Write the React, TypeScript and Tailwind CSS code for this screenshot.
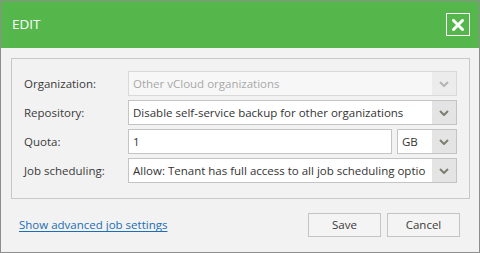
import React from "react";

const font = { fontFamily: '"Open Sans", "Noto Sans", sans-serif' };

function Chevron({ color }: { color: string }) {
  return (
    <svg width="10" height="6" viewBox="0 0 10 6" className="block">
      <polyline points="1,1 5,5 9,1" fill="none" stroke={color} strokeWidth="2" />
    </svg>
  );
}

function Select({ value, disabled, className }: { value: string; disabled?: boolean; className?: string }) {
  return (
    <div
      className={
        "flex min-w-0 h-[25px] border " +
        (disabled ? "border-[#d9d9d9] bg-[#f7f7f7] text-[#a8a8a8] " : "border-[#c4c4c4] bg-white text-[#333333] ") +
        (className ?? "")
      }
    >
      <div className="flex-1 min-w-0 overflow-hidden whitespace-nowrap pl-[4px] leading-[23px]">{value}</div>
      <div className={"w-[24px] shrink-0 flex items-center justify-center " + (disabled ? "bg-[#ececec]" : "bg-[#e4e4e4]")}>
        <Chevron color={disabled ? "#b4b4b4" : "#7d7d70"} />
      </div>
    </div>
  );
}

function Label({ children }: { children: React.ReactNode }) {
  return <div className="w-[104px] shrink-0 text-[#3a3a3a]">{children}</div>;
}

export default function App() {
  return (
    <div className="w-[480px] h-[253px] border border-[#8e8e8e] bg-[#f2f2f2] flex flex-col text-[11.5px]" style={font}>
      <div className="h-[47px] bg-[#55b74b] flex items-center justify-between pl-[11px] pr-[9px]">
        <span className="text-white text-[13.5px]">EDIT</span>
        <div className="w-[24px] h-[23px] border border-white flex items-center justify-center">
          <svg width="12" height="12" viewBox="0 0 12 12" className="block">
            <path d="M1.5 1.5 L10.5 10.5 M10.5 1.5 L1.5 10.5" stroke="white" strokeWidth="3" strokeLinecap="square" fill="none" />
          </svg>
        </div>
      </div>
      <div className="flex-1 flex flex-col pl-[10px] pr-[9px] pt-[10px]">
        <div className="border border-[#c8c8c8] pt-[12px] pb-[15px] pl-[12px] pr-[12px] flex flex-col gap-[4px]">
          <div className="flex items-center">
            <Label>Organization:</Label>
            <Select value="Other vCloud organizations" disabled className="flex-1" />
          </div>
          <div className="flex items-center">
            <Label>Repository:</Label>
            <Select value="Disable self-service backup for other organizations" className="flex-1" />
          </div>
          <div className="flex items-center">
            <Label>Quota:</Label>
            <div className="flex-1 min-w-0 flex gap-[5px]">
              <div className="flex-1 min-w-0 h-[25px] border border-[#c4c4c4] bg-white text-[#333333] pl-[4px] leading-[23px]">1</div>
              <Select value="GB" className="w-[60px] shrink-0" />
            </div>
          </div>
          <div className="flex items-center">
            <Label>Job scheduling:</Label>
            <Select value="Allow: Tenant has full access to all job scheduling optio" className="flex-1" />
          </div>
        </div>
        <div className="flex items-center justify-between pl-[8px] pr-[10px] mt-[14px]">
          <a className="text-[#1c6fb4] underline underline-offset-[2px] cursor-pointer">Show advanced job settings</a>
          <div className="flex gap-[6px]">
            <button className="w-[73px] h-[24px] border border-[#c4c4c4] bg-[#f4f4f4] text-[#3a3a3a]">Save</button>
            <button className="w-[73px] h-[24px] border border-[#c4c4c4] bg-[#f4f4f4] text-[#3a3a3a]">Cancel</button>
          </div>
        </div>
      </div>
    </div>
  );
}
